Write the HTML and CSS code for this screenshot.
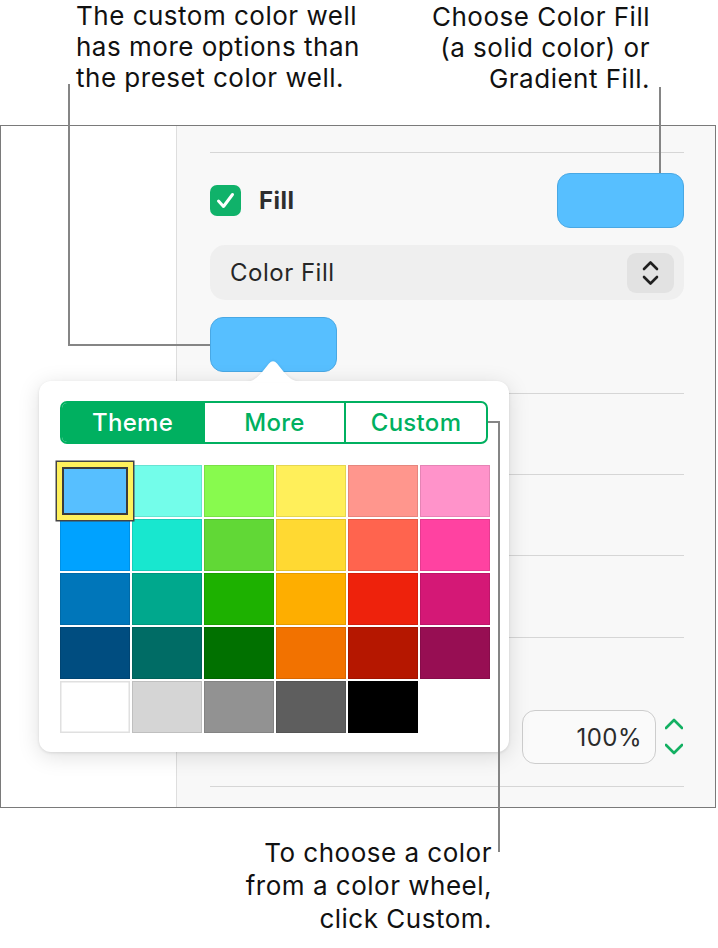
FILE: index.html
```html
<!DOCTYPE html>
<html>
<head>
<meta charset="utf-8">
<link rel="stylesheet" href="styles.css">
</head>
<body>
<div class="page">
  <div class="top-callouts">
    <p class="callout callout-left">The custom color well<br>has more options than<br>the preset color well.</p>
    <p class="callout callout-right">Choose Color Fill<br>(a solid color) or<br>Gradient Fill.</p>
  </div>

  <div class="frame">
    <div class="canvas-pane"></div>
    <div class="sidebar">
      <div class="sep sep-top"></div>
      <div class="fill-row">
        <div class="check">
          <svg width="31" height="31" viewBox="0 0 31 31"><path d="M8.5 16 L13.5 21.5 L22.5 9.5" fill="none" stroke="#fff" stroke-width="3" stroke-linecap="round" stroke-linejoin="round"/></svg>
        </div>
        <span class="fill-label">Fill</span>
        <div class="well well-main"></div>
      </div>
      <div class="select">
        <span class="select-label">Color Fill</span>
        <div class="select-btn">
          <svg width="47" height="40" viewBox="0 0 47 40"><path d="M17 16 L23.5 9.5 L30 16 M17 24 L23.5 30.5 L30 24" fill="none" stroke="#1f1f1f" stroke-width="2.6" stroke-linecap="round" stroke-linejoin="round"/></svg>
        </div>
      </div>
      <div class="well well-custom"></div>
      <div class="sep sep-a"></div>
      <div class="sep sep-b"></div>
      <div class="sep sep-b"></div>
      <div class="sep sep-c"></div>
      <div class="opacity-row">
        <div class="field">100%</div>
        <svg class="stepper" width="18" height="44" viewBox="0 0 18 44"><path d="M1 13 L9 5 L17 13 M1 30 L9 38 L17 30" fill="none" stroke="#13b062" stroke-width="2.6" stroke-linecap="round" stroke-linejoin="round"/></svg>
      </div>
      <div class="sep sep-bottom"></div>
    </div>
  </div>

  <p class="callout callout-bottom">To choose a color<br>from a color wheel,<br>click Custom.</p>

  <div class="popover">
    <svg class="popover-arrow" width="60" height="28" viewBox="0 0 60 28"><path d="M0 28 C10 28 14 24 20 17 L26 9.5 Q30 5 34 9.5 L40 17 C46 24 50 28 60 28 Z" fill="#fff"/></svg>
    <div class="tabs">
      <div class="tab tab-active">Theme</div>
      <div class="tab">More</div>
      <div class="tab">Custom</div>
    </div>
    <div class="swatches">
      <div class="sw sw-selected" style="background:#57bfff"></div>
      <div class="sw" style="background:#73fdea"></div>
      <div class="sw" style="background:#88fa4e"></div>
      <div class="sw" style="background:#ffef5a"></div>
      <div class="sw" style="background:#ff968d"></div>
      <div class="sw" style="background:#ff93ca"></div>

      <div class="sw" style="background:#00a2ff"></div>
      <div class="sw" style="background:#18e7cf"></div>
      <div class="sw" style="background:#61d836"></div>
      <div class="sw" style="background:#ffd932"></div>
      <div class="sw" style="background:#ff644e"></div>
      <div class="sw" style="background:#ff42a1"></div>

      <div class="sw" style="background:#0076ba"></div>
      <div class="sw" style="background:#00a88d"></div>
      <div class="sw" style="background:#1db100"></div>
      <div class="sw" style="background:#feae00"></div>
      <div class="sw" style="background:#ee220c"></div>
      <div class="sw" style="background:#d41876"></div>

      <div class="sw" style="background:#004d80"></div>
      <div class="sw" style="background:#006c65"></div>
      <div class="sw" style="background:#017100"></div>
      <div class="sw" style="background:#f27200"></div>
      <div class="sw" style="background:#b51700"></div>
      <div class="sw" style="background:#970e53"></div>

      <div class="sw sw-white" style="background:#ffffff"></div>
      <div class="sw" style="background:#d5d5d5"></div>
      <div class="sw" style="background:#929292"></div>
      <div class="sw" style="background:#5e5e5e"></div>
      <div class="sw" style="background:#000000"></div>
    </div>
  </div>

  <svg class="leaders" width="718" height="948" viewBox="0 0 718 948">
    <path d="M69 84 V345 H210" fill="none" stroke="#858585" stroke-width="2"/>
    <path d="M660 87 V173" fill="none" stroke="#858585" stroke-width="2"/>
    <path d="M488 422 H499 V852" fill="none" stroke="#858585" stroke-width="2"/>
  </svg>
</div>
</body>
</html>
```

FILE: styles.css
```css
* { box-sizing: border-box; }

html, body {
  margin: 0;
  padding: 0;
  background: #ffffff;
}

body {
  font-family: "Inter", "Noto Sans", "Liberation Sans", sans-serif;
  color: #111;
}

.page {
  position: relative;
  width: 718px;
  height: 948px;
  overflow: hidden;
}

/* ---------- callouts ---------- */
.callout {
  margin: 0;
  font-size: 26px;
  line-height: 31px;
  color: #111;
  letter-spacing: 0.5px;
}

.top-callouts {
  height: 125px;
  display: flex;
  justify-content: space-between;
  align-items: flex-start;
  padding: 0 68px 0 76px;
}

.callout-left {
  margin-top: 0;
  text-align: left;
}

.callout-right {
  margin-top: 1px;
  text-align: right;
}

.callout-bottom {
  margin-top: 28px;
  line-height: 33px;
  padding-right: 226px;
  text-align: right;
}

/* ---------- frame ---------- */
.frame {
  width: 716px;
  height: 683px;
  border: 1px solid #7a7a7a;
  display: grid;
  grid-template-columns: 176px 1fr;
}

.canvas-pane {
  background: #ffffff;
  border-right: 1px solid #dedede;
}

.sidebar {
  background: #f8f8f8;
  padding: 0 31px 0 33px;
  display: flex;
  flex-direction: column;
}

.sep {
  height: 1px;
  background: #d6d6d6;
  flex: none;
}
.sep-top { margin-top: 26px; }
.sep-a { margin-top: 21px; }
.sep-b { margin-top: 80px; }
.sep-c { margin-top: 81px; }
.sep-bottom { margin-top: 22px; }

.fill-row {
  margin-top: 20px;
  height: 55px;
  display: flex;
  align-items: center;
}

.check {
  width: 31px;
  height: 31px;
  border-radius: 7px;
  background: #10b26a;
  display: flex;
}

.fill-label {
  margin-left: 18px;
  font-size: 24px;
  font-weight: 700;
  letter-spacing: 0.5px;
  color: #2e2e2e;
}

.well {
  height: 55px;
  width: 127px;
  border-radius: 13px;
  background: #57bfff;
  border: 1px solid #49a8e4;
}

.well-main { margin-left: auto; }
.well-custom { margin-top: 17px; }

.select {
  margin-top: 17px;
  height: 55px;
  border-radius: 15px;
  background: #efefef;
  display: flex;
  align-items: center;
  padding: 0 10px 0 20px;
}

.select-label {
  font-size: 24px;
  letter-spacing: 0.5px;
  color: #262626;
}

.select-btn {
  margin-left: auto;
  width: 47px;
  height: 40px;
  border-radius: 9px;
  background: #e2e2e2;
  display: flex;
}

.opacity-row {
  margin-top: 72px;
  height: 54px;
  display: flex;
  align-items: center;
  justify-content: flex-end;
  gap: 9px;
  padding-right: 1px;
}

.field {
  width: 134px;
  height: 54px;
  border: 1.5px solid #cdcdcd;
  border-radius: 13px;
  background: #fafafa;
  font-size: 24px;
  letter-spacing: 0.5px;
  color: #2b2b2b;
  display: flex;
  align-items: center;
  justify-content: flex-end;
  padding-right: 13px;
}

/* ---------- popover ---------- */
.popover {
  position: absolute;
  left: 39px;
  top: 381px;
  width: 470px;
  height: 371px;
  background: #ffffff;
  border-radius: 12px;
  box-shadow: 0 1px 3px rgba(0,0,0,0.10), 0 4px 22px rgba(0,0,0,0.13);
  padding: 20px 0 0 21px;
}

.popover-arrow {
  position: absolute;
  left: 204px;
  top: -27px;
  filter: drop-shadow(0 -1px 1px rgba(0,0,0,0.06));
}

.tabs {
  width: 428px;
  height: 43px;
  border: 2px solid #00b060;
  border-radius: 7px;
  display: grid;
  grid-template-columns: 141px 141px 1fr;
  overflow: hidden;
}

.tab {
  display: flex;
  align-items: center;
  justify-content: center;
  font-size: 24px;
  font-weight: 500;
  color: #00b060;
  letter-spacing: 0.3px;
}

.tab + .tab {
  border-left: 2px solid #00b060;
}

.tab-active {
  background: #00b060;
  color: #ffffff;
}

.swatches {
  margin-top: 21px;
  display: grid;
  grid-template-columns: repeat(6, 70px);
  grid-auto-rows: 52px;
  gap: 2px;
}

.sw {
  box-shadow: inset 0 0 0 1px rgba(0,0,0,0.10);
}

.sw-white {
  box-shadow: inset 0 0 0 1.5px #e0e0e0;
}

.sw-selected {
  box-shadow:
    inset 0 0 0 2px #fff15c,
    inset 0 0 0 4px #3b3b3b,
    0 0 0 3px #fff15c,
    0 0 0 4.5px #444444;
  position: relative;
  z-index: 1;
}

/* ---------- leader lines ---------- */
.leaders {
  position: absolute;
  left: 0;
  top: 0;
  pointer-events: none;
}
```
